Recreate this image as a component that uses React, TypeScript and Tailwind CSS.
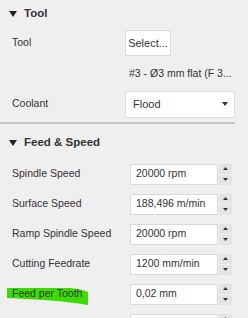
import React from "react";

const Spinner: React.FC = () => (
  <div className="ml-[1px] flex h-full w-[13px] flex-col gap-[1px]">
    <div className="flex flex-1 items-center justify-center bg-[#e4e4e4]">
      <svg width="5" height="3" viewBox="0 0 5 3">
        <path d="M2.5 0 L5 3 L0 3 Z" fill="#333" />
      </svg>
    </div>
    <div className="flex flex-1 items-center justify-center bg-[#e4e4e4]">
      <svg width="5" height="3" viewBox="0 0 5 3">
        <path d="M0 0 L5 0 L2.5 3 Z" fill="#333" />
      </svg>
    </div>
  </div>
);

const Header: React.FC<{ title: string; className: string }> = ({ title, className }) => (
  <div className={`flex items-center pl-[9px] ${className}`}>
    <svg width="8" height="6" viewBox="0 0 8 6" className="mr-[7px]">
      <path d="M0 0 L8 0 L4 6 Z" fill="#222" />
    </svg>
    <span className="text-[11.5px] font-bold text-[#333]">{title}</span>
  </div>
);

const NumberRow: React.FC<{ label: string; value: string; mark?: boolean }> = ({ label, value, mark }) => (
  <div className="flex h-[30px] items-center">
    <div className="relative flex h-full w-[130px] items-center pl-[12px]">
      {mark && (
        <svg className="absolute left-0 top-0" width="100" height="30" viewBox="0 0 100 30">
          <path d="M7 9 L70 9 Q82 10 88 13 L88 26 Q70 23 45 21 L7 19 Z" fill="#3ddc00" />
        </svg>
      )}
      <span className="relative">{label}</span>
    </div>
    <div className="flex h-[21px]">
      <div className="flex w-[88px] items-center border border-[#d9d9d9] bg-white pl-[5px]">{value}</div>
      <Spinner />
    </div>
  </div>
);

export default function App() {
  return (
    <div
      className="h-[318px] w-[248px] overflow-hidden bg-[#efefef] text-[10.5px] text-[#333]"
      style={{ fontFamily: '"Liberation Sans", Arial, sans-serif' }}
    >
      <Header title="Tool" className="h-[28px]" />

      <div className="flex h-[30px] items-center">
        <div className="w-[125px] pl-[12px]">Tool</div>
        <button className="h-[26px] w-[46px] border border-[#dcdcdc] bg-white text-[11px] text-[#333]">
          Select...
        </button>
      </div>

      <div className="flex h-[32px] items-center pl-[129px]">#3 - Ø3 mm flat (F 3...</div>

      <div className="flex h-[28px] items-center">
        <div className="w-[125px] pl-[12px]">Coolant</div>
        <div className="flex h-[27px] w-[110px] items-center justify-between border border-[#dcdcdc] bg-white pl-[7px] pr-[6px] text-[11px]">
          <span>Flood</span>
          <svg width="6" height="4" viewBox="0 0 6 4">
            <path d="M0 0 L6 0 L3 4 Z" fill="#333" />
          </svg>
        </div>
      </div>

      <div className="mt-[4px] h-[2px] w-[235px] bg-[#c4c4c4]" />

      <Header title="Feed & Speed" className="h-[35px] pt-[3px]" />

      <NumberRow label="Spindle Speed" value="20000 rpm" />
      <NumberRow label="Surface Speed" value="188,496 m/min" />
      <NumberRow label="Ramp Spindle Speed" value="20000 rpm" />
      <NumberRow label="Cutting Feedrate" value="1200 mm/min" />
      <NumberRow label="Feed per Tooth" value="0,02 mm" mark />
      <NumberRow label="" value="" />
    </div>
  );
}
